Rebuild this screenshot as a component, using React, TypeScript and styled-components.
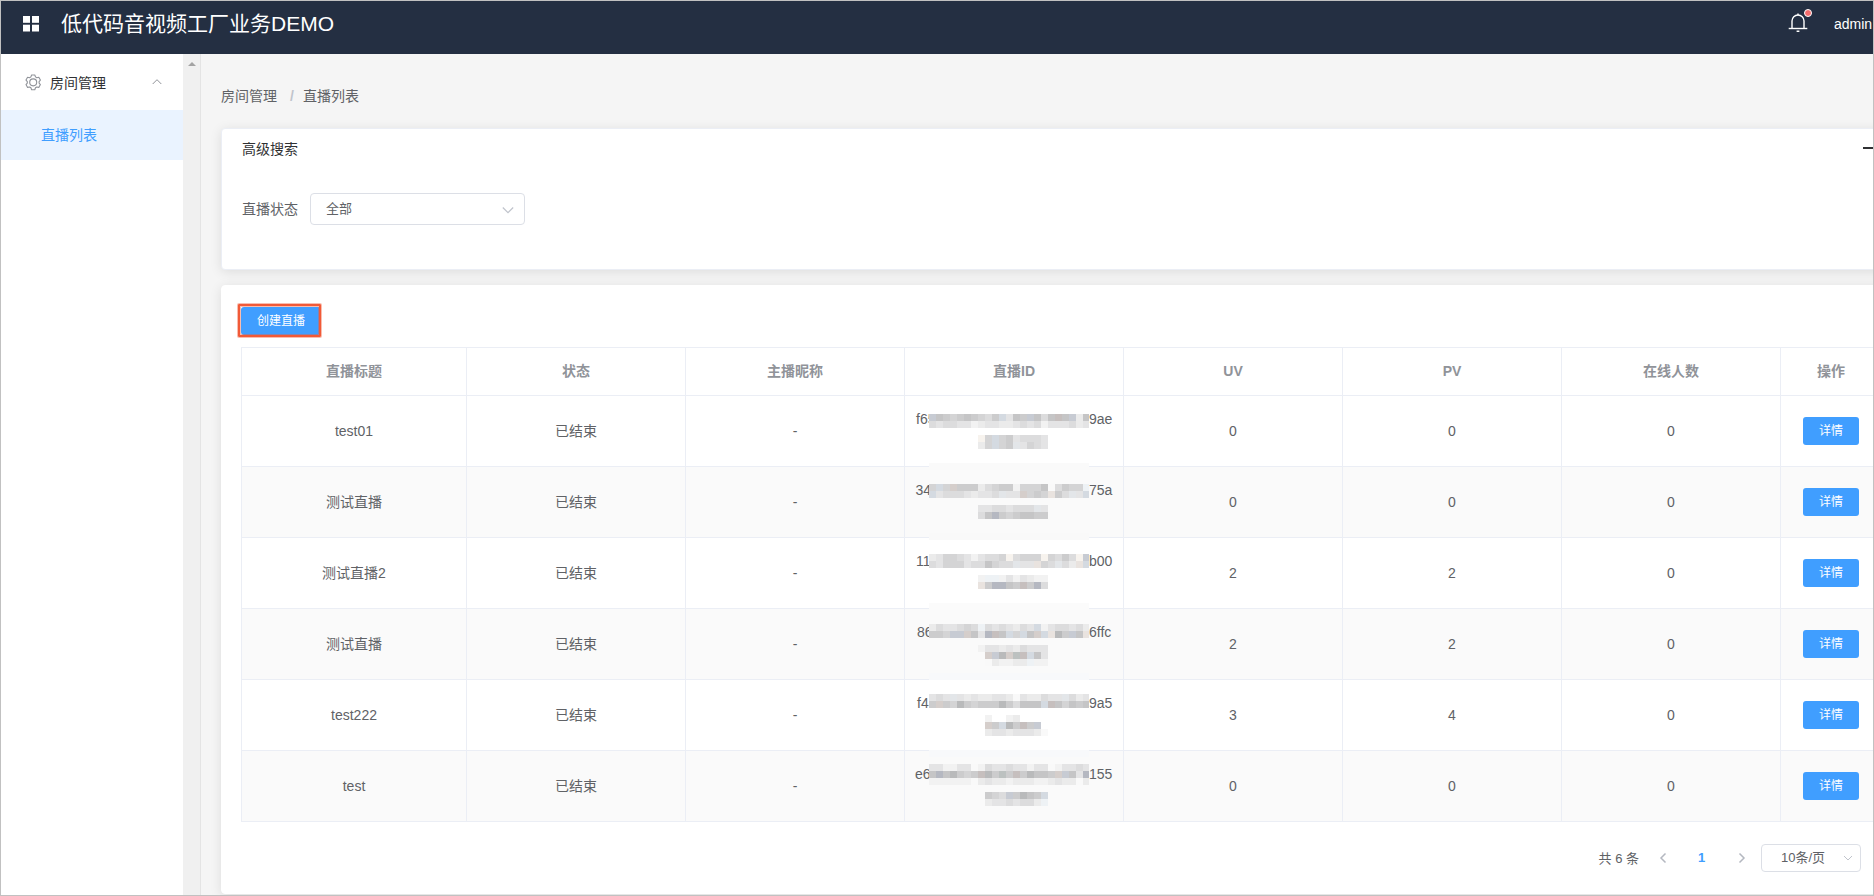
import React from 'react';
import styled, { createGlobalStyle } from 'styled-components';

const Global = createGlobalStyle`
  * { box-sizing: border-box; }
  html, body { margin: 0; padding: 0; overflow: hidden; }
  body {
    font-family: "Liberation Sans", "Noto Sans CJK SC", sans-serif;
    font-size: 14px;
    color: #606266;
  }
`;

const Frame = styled.div`
  width: 1874px;
  height: 896px;
  border: 1px solid #c1c1c1;
  display: flex;
  flex-direction: column;
  overflow: hidden;
  background: #f5f5f5;
`;

const Header = styled.header`
  flex: none;
  height: 53px;
  background: #242f42;
  color: #fff;
  display: flex;
  align-items: center;
  padding: 0 0 7px 22px;
`;

const AppTitle = styled.h1`
  margin: 0 auto 0 21px;
  font-size: 21px;
  font-weight: 400;
  line-height: 30px;
  white-space: nowrap;
`;

const BellWrap = styled.div`
  position: relative;
  width: 20px;
  height: 20px;
  margin: 0 26px 2px 0;
`;

const BellDot = styled.span`
  position: absolute;
  left: 16px;
  top: -4px;
  width: 8px;
  height: 8px;
  border-radius: 50%;
  background: #f56c6c;
  border: 1px solid #fff;
`;

const UserName = styled.span`
  width: 39px;
  white-space: nowrap;
`;

const Body = styled.div`
  flex: 1;
  min-height: 0;
  display: flex;
`;

const Sidebar = styled.nav`
  flex: none;
  width: 182px;
  background: #fff;
`;

const MenuGroup = styled.div`
  height: 56px;
  display: flex;
  align-items: center;
  gap: 8px;
  padding: 0 21px 0 24px;
  color: #303133;
`;

const MenuLabel = styled.span`
  flex: 1;
`;

const MenuItem = styled.div`
  height: 50px;
  line-height: 50px;
  padding-left: 40px;
  background: #eaf3ff;
  color: #409eff;
`;

const ScrollTrack = styled.div`
  flex: none;
  width: 18px;
  background: #f0f0f0;
  border-right: 1px solid #e4e4e4;
  padding: 7px 0 0 5px;
  line-height: 0;
`;

const Main = styled.main`
  flex: 1;
  min-width: 0;
  overflow: hidden;
  padding-left: 20px;
`;

const Breadcrumb = styled.div`
  height: 74px;
  display: flex;
  align-items: center;
  padding-top: 8px;
`;

const Slash = styled.span`
  margin: 2px 9px 0 13px;
  font-weight: 700;
  color: #c0c4cc;
`;

const Card = styled.section<{ $height: number }>`
  width: 1700px;
  height: ${(p) => p.$height}px;
  background: #fff;
  border: 1px solid #ebeef5;
  border-radius: 4px;
  box-shadow: 0 2px 12px rgba(0, 0, 0, 0.1);
`;

const SearchCard = styled(Card)`
  margin-bottom: 15px;
  padding-left: 20px;
`;

const ListCard = styled(Card)`
  border-color: #fff;
  padding: 21px 0 0 19px;
`;

const CardTitle = styled.div`
  height: 38px;
  width: 1635px;
  display: flex;
  align-items: center;
  justify-content: space-between;
  color: #303133;
`;

const FieldRow = styled.div`
  display: flex;
  align-items: center;
  gap: 12px;
  margin-top: 26px;
`;

const FieldLabel = styled.label`
  padding-bottom: 3px;
`;

const Select = styled.div<{ $w: number; $h: number; $pad: string }>`
  width: ${(p) => p.$w}px;
  height: ${(p) => p.$h}px;
  padding: ${(p) => p.$pad};
  border: 1px solid #dcdfe6;
  border-radius: 4px;
  background: #fff;
  font-size: 13px;
  display: flex;
  align-items: center;
  justify-content: space-between;
  white-space: nowrap;
`;

const Button = styled.button<{ $w: number; $h?: number }>`
  position: relative;
  display: block;
  width: ${(p) => p.$w}px;
  height: ${(p) => p.$h ?? 28}px;
  padding: 0;
  border: 0;
  border-radius: 3px;
  background: #409eff;
  color: #fff;
  font-family: inherit;
  font-size: 12px;
  line-height: ${(p) => p.$h ?? 28}px;
`;

const Ring = styled.span`
  position: absolute;
  left: -3px;
  top: -3px;
  width: 83px;
  height: 33px;
  border: 2px solid #f15a38;
  border-radius: 1px;
  box-shadow: 0 0 0 1px rgba(241, 90, 56, 0.4), inset 0 0 0 1px rgba(241, 90, 56, 0.4);
`;

const TableWrap = styled.div`
  position: relative;
  margin-top: 12px;
`;

const Table = styled.div`
  width: 1641px;
  border-top: 1px solid #ebeef5;
  border-left: 1px solid #ebeef5;
`;

const Row = styled.div<{ $head?: boolean; $striped?: boolean }>`
  display: grid;
  grid-template-columns: 225px repeat(6, 219px) 101px;
  height: ${(p) => (p.$head ? 48 : 71)}px;
  background: ${(p) => (p.$striped ? '#fafafa' : '#fff')};
  color: ${(p) => (p.$head ? '#909399' : '#606266')};
  font-weight: ${(p) => (p.$head ? 700 : 400)};
`;

const Cell = styled.div<{ $raise?: number }>`
  display: flex;
  align-items: center;
  justify-content: center;
  min-width: 0;
  padding-bottom: ${(p) => p.$raise ?? 0}px;
  border-right: 1px solid #ebeef5;
  border-bottom: 1px solid #ebeef5;
`;

const IdCell = styled(Cell)`
  align-items: flex-start;
  justify-content: flex-start;
  padding-top: 12px;
  line-height: 23px;
`;

const IdPrefix = styled.span<{ $indent: number }>`
  width: 24px;
  padding-left: ${(p) => p.$indent}px;
  margin-right: 160px;
  white-space: nowrap;
`;

const MosaicLayer = styled.div`
  position: absolute;
  left: 688px;
  top: 67px;
  line-height: 0;
`;

const Pager = styled.div`
  display: flex;
  align-items: center;
  width: 1620px;
  height: 28px;
  margin-top: 22px;
  justify-content: flex-end;
  font-size: 13px;
`;

const Total = styled.span`
  margin-right: 20px;
  padding-bottom: 2px;
`;

const PageNumber = styled.span`
  margin: 0 32px 0 31px;
  padding-bottom: 1px;
  width: 8px;
  font-weight: 700;
  color: #409eff;
`;

const PageSize = styled(Select)`
  margin-left: 15px;
`;

type ChevronProps = { d: string; w: number; h: number; color?: string; sw?: number };
const Chevron = ({ d, w, h, color = '#c0c4cc', sw = 1.2 }: ChevronProps) => (
  <svg width={w} height={h} viewBox={`0 0 ${w} ${h}`} fill="none" stroke={color} strokeWidth={sw}>
    <path d={d} />
  </svg>
);

const GridIcon = () => (
  <svg width="17" height="16" viewBox="0 0 17 16" fill="#fff">
    <rect x="0" y="0" width="7" height="6.800" />
    <rect x="9" y="0" width="7" height="6.800" />
    <rect x="0" y="8.700" width="7" height="6.800" />
    <rect x="9" y="8.700" width="7" height="6.800" />
  </svg>
);

const GearIcon = () => (
  <svg width="17" height="17" viewBox="0 0 17 17" fill="none" stroke="#909399" strokeWidth="1.100">
    <path
      strokeLinejoin="round"
      d="M6.600 1h3.200l.7 1.900 1.300.8 2-.4 1.600 2.800-1.300 1.500v1.500l1.300 1.500-1.600 2.800-2-.4-1.300.8-.7 1.900H6.600l-.7-1.900-1.300-.8-2 .4L1 10.600l1.300-1.500V7.600L1 6.100l1.600-2.800 2 .4 1.300-.8z"
    />
    <circle cx="8.200" cy="8.350" r="3.500" />
  </svg>
);

const BellIcon = () => (
  <svg width="20" height="20" viewBox="0 0 20 20" fill="none" stroke="#fff" strokeWidth="1.400">
    <path d="M4 15V8a6 6 0 0 1 12 0v7" />
    <path d="M.7 15.500h18.600" />
    <path d="M10 .4v1.800M8.600 18.300h2.800" />
  </svg>
);

/* Pixelated mask over the stream IDs: each letter is one 7px block. */
const TONES: Record<string, string> = {
  a: '#f9f9f9', b: '#f2f2f2', c: '#ebebeb', d: '#e4e4e5', e: '#dcdcdd', f: '#d4d4d5',
  g: '#cccccd', h: '#c5c5c6', i: '#b9babb',
  p: '#f7f3ee', q: '#e9e3df', r: '#d5cecb', s: '#c6bfbe',
  u: '#eef2f5', v: '#e3e6e9', w: '#d4dae1', x: '#c7cbd3', y: '#b5b8c1', z: '#bcc1c0',
};

const BLOCKS: [number, number, string][] = [
  [0, 0, 'xhgfghgfegwdhgxhehshxch'],
  [1, 0, 'edeeddbcddccdedebdddecd'],
  [3, 7, 'pfwfgdeeed'],
  [4, 7, 'cfwfgvdfed'],
  [10, 0, 'fwfrgggcefggbfffhaegffu'],
  [11, 0, 'wdeeedcddevddrfgfqgevdw'],
  [13, 7, 'ddeedeeevd'],
  [14, 7, 'ehygfghhgg'],
  [20, 0, 'cdffedbdeefpefffpfegepx'],
  [21, 0, 'edfffdeehfeevddqfevecqw'],
  [23, 7, 'buubdbdcbb'],
  [24, 7, 'qgyyhgsgye'],
  [30, 0, 'ceddefeuededcedwbdeedec'],
  [31, 0, 'ggfxxrhdyshwfwhrwqigxhq'],
  [33, 7, 'bddcdceddd'],
  [34, 8, 'rxirzswhd'],
  [35, 8, 'acbbccubb'],
  [40, 0, 'dedvdcdccddcadcceddvecd'],
  [41, 0, 'grgfigfgggigehhhwshfhgh'],
  [43, 8, 'b'],
  [43, 11, 'bc'],
  [44, 8, 'rgwigsgx'],
  [45, 8, 'cddcdddca'],
  [50, 0, 'ddbbddabeddeddbddabdded'],
  [51, 0, 'hyhigfgsigzgsgihhgrxhdy'],
  [52, 0, 'bbbbbbacdccbcccbbcdccac'],
  [54, 8, 'gfexgihgw'],
  [55, 8, 'cddedeecu'],
];

/* Flattened row dividers: [first line, number of lines, colour]. */
const BANDS: [number, number, string][] = [
  [7, 3, '#fafafa'], [17, 1, '#f9f9f9'], [27, 1, '#fbfbfb'], [28, 2, '#fafafa'],
  [37, 1, '#f8f9fb'], [48, 1, '#f8f9fb'],
];

const Mosaic = () => (
  <svg width="160" height="392" shapeRendering="crispEdges">
    {BANDS.map(([y, n, fill]) => (
      <rect key={y} x={0} y={y * 7} width={160} height={n * 7} fill={fill} />
    ))}
    {BLOCKS.map(([y, x, tones]) =>
      tones.split('').map((t, i) => (
        <rect key={`${y}-${x}-${i}`} x={(x + i) * 7} y={y * 7} width={7} height={7} fill={TONES[t]} />
      ))
    )}
  </svg>
);

const HEADINGS = ['直播标题', '状态', '主播昵称', '直播ID', 'UV', 'PV', '在线人数', '操作'];

const STREAMS = [
  { title: 'test01', pre: 'f65', indent: 11, post: '9ae', uv: 0, pv: 0 },
  { title: '测试直播', pre: '34', indent: 10.5, post: '75a', uv: 0, pv: 0 },
  { title: '测试直播2', pre: '11', indent: 11, post: 'b00', uv: 2, pv: 2 },
  { title: '测试直播', pre: '86', indent: 12, post: '6ffc', uv: 2, pv: 2 },
  { title: 'test222', pre: 'f4', indent: 12, post: '9a5', uv: 3, pv: 4 },
  { title: 'test', pre: 'e6', indent: 10, post: '155', uv: 0, pv: 0 },
];

export default function App() {
  return (
    <>
      <Global />
      <Frame>
        <Header>
          <GridIcon />
          <AppTitle>低代码音视频工厂业务DEMO</AppTitle>
          <BellWrap>
            <BellIcon />
            <BellDot />
          </BellWrap>
          <UserName>admin</UserName>
        </Header>
        <Body>
          <Sidebar>
            <MenuGroup>
              <GearIcon />
              <MenuLabel>房间管理</MenuLabel>
              <Chevron w={10} h={9} d="M.7 6l4.300-4.300L9.300 6" color="#909399" sw={1} />
            </MenuGroup>
            <MenuItem>直播列表</MenuItem>
          </Sidebar>
          <ScrollTrack>
            <svg width="8" height="4" viewBox="0 0 8 4" fill="#a3a3a3">
              <path d="M0 4l4-4 4 4z" />
            </svg>
          </ScrollTrack>
          <Main>
            <Breadcrumb>
              房间管理<Slash>/</Slash>直播列表
            </Breadcrumb>
            <SearchCard $height={142}>
              <CardTitle>
                高级搜索
                <svg width="14" height="2" viewBox="0 0 14 2">
                  <rect width="14" height="2" fill="#303133" />
                </svg>
              </CardTitle>
              <FieldRow>
                <FieldLabel>直播状态</FieldLabel>
                <Select $w={215} $h={32} $pad="0 10px 3px 15px">
                  全部
                  <Chevron w={12} h={12} d="M.8 5.500l5.200 5.200 5.200-5.200" />
                </Select>
              </FieldRow>
            </SearchCard>
            <ListCard $height={609}>
              <Button $w={80}>
                创建直播
                <Ring />
              </Button>
              <TableWrap>
                <Table>
                  <Row $head>
                    {HEADINGS.map((h) => (
                      <Cell key={h} $raise={h.length === 2 && h.endsWith('V') ? 1 : 3}>{h}</Cell>
                    ))}
                  </Row>
                  {STREAMS.map((s, i) => (
                    <Row key={i} $striped={i % 2 === 1}>
                      <Cell $raise={s.title.startsWith('测') ? 2 : 0}>{s.title}</Cell>
                      <Cell $raise={2}>已结束</Cell>
                      <Cell>-</Cell>
                      <IdCell>
                        <IdPrefix $indent={s.indent}>{s.pre}</IdPrefix>
                        {s.post}
                      </IdCell>
                      <Cell>{s.uv}</Cell>
                      <Cell>{s.pv}</Cell>
                      <Cell>0</Cell>
                      <Cell>
                        <Button $w={56}>详情</Button>
                      </Cell>
                    </Row>
                  ))}
                </Table>
                <MosaicLayer>
                  <Mosaic />
                </MosaicLayer>
              </TableWrap>
              <Pager>
                <Total>共 6 条</Total>
                <Chevron w={8} h={12} d="M6.500 1.500L2 6l4.500 4.500" color="#b4b8c0" sw={1.5} />
                <PageNumber>1</PageNumber>
                <Chevron w={8} h={12} d="M1.500 1.500L6 6l-4.500 4.500" color="#b4b8c0" sw={1.5} />
                <PageSize $w={100} $h={28} $pad="0 7px 3px 19px">
                  10条/页
                  <Chevron w={10} h={8} d="M1 3l4 4 4-4" sw={1} />
                </PageSize>
              </Pager>
            </ListCard>
          </Main>
        </Body>
      </Frame>
    </>
  );
}
